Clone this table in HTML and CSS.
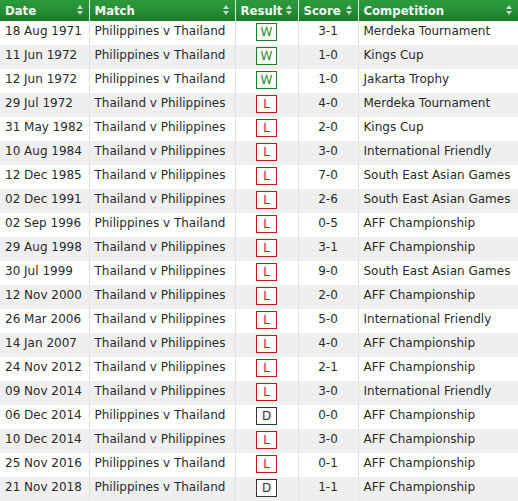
FILE: index.html
```html
<!DOCTYPE html>
<html>
<head>
<meta charset="utf-8">
<link rel="stylesheet" href="styles.css">
</head>
<body>
<table class="results">
  <colgroup>
    <col class="c-date"><col class="c-match"><col class="c-result"><col class="c-score"><col class="c-comp">
  </colgroup>
  <thead>
    <tr>
      <th>Date<span class="sort"></span></th>
      <th>Match<span class="sort"></span></th>
      <th>Result<span class="sort"></span></th>
      <th>Score<span class="sort"></span></th>
      <th>Competition<span class="sort"></span></th>
    </tr>
  </thead>
  <tbody>
    <tr><td>18 Aug 1971</td><td>Philippines v Thailand</td><td class="res"><span class="badge w">W</span></td><td class="score">3-1</td><td>Merdeka Tournament</td></tr>
    <tr><td>11 Jun 1972</td><td>Philippines v Thailand</td><td class="res"><span class="badge w">W</span></td><td class="score">1-0</td><td>Kings Cup</td></tr>
    <tr><td>12 Jun 1972</td><td>Philippines v Thailand</td><td class="res"><span class="badge w">W</span></td><td class="score">1-0</td><td>Jakarta Trophy</td></tr>
    <tr><td>29 Jul 1972</td><td>Thailand v Philippines</td><td class="res"><span class="badge l">L</span></td><td class="score">4-0</td><td>Merdeka Tournament</td></tr>
    <tr><td>31 May 1982</td><td>Thailand v Philippines</td><td class="res"><span class="badge l">L</span></td><td class="score">2-0</td><td>Kings Cup</td></tr>
    <tr><td>10 Aug 1984</td><td>Thailand v Philippines</td><td class="res"><span class="badge l">L</span></td><td class="score">3-0</td><td>International Friendly</td></tr>
    <tr><td>12 Dec 1985</td><td>Thailand v Philippines</td><td class="res"><span class="badge l">L</span></td><td class="score">7-0</td><td>South East Asian Games</td></tr>
    <tr><td>02 Dec 1991</td><td>Thailand v Philippines</td><td class="res"><span class="badge l">L</span></td><td class="score">2-6</td><td>South East Asian Games</td></tr>
    <tr><td>02 Sep 1996</td><td>Philippines v Thailand</td><td class="res"><span class="badge l">L</span></td><td class="score">0-5</td><td>AFF Championship</td></tr>
    <tr><td>29 Aug 1998</td><td>Thailand v Philippines</td><td class="res"><span class="badge l">L</span></td><td class="score">3-1</td><td>AFF Championship</td></tr>
    <tr><td>30 Jul 1999</td><td>Thailand v Philippines</td><td class="res"><span class="badge l">L</span></td><td class="score">9-0</td><td>South East Asian Games</td></tr>
    <tr><td>12 Nov 2000</td><td>Thailand v Philippines</td><td class="res"><span class="badge l">L</span></td><td class="score">2-0</td><td>AFF Championship</td></tr>
    <tr><td>26 Mar 2006</td><td>Thailand v Philippines</td><td class="res"><span class="badge l">L</span></td><td class="score">5-0</td><td>International Friendly</td></tr>
    <tr><td>14 Jan 2007</td><td>Thailand v Philippines</td><td class="res"><span class="badge l">L</span></td><td class="score">4-0</td><td>AFF Championship</td></tr>
    <tr><td>24 Nov 2012</td><td>Thailand v Philippines</td><td class="res"><span class="badge l">L</span></td><td class="score">2-1</td><td>AFF Championship</td></tr>
    <tr><td>09 Nov 2014</td><td>Thailand v Philippines</td><td class="res"><span class="badge l">L</span></td><td class="score">3-0</td><td>International Friendly</td></tr>
    <tr><td>06 Dec 2014</td><td>Philippines v Thailand</td><td class="res"><span class="badge d">D</span></td><td class="score">0-0</td><td>AFF Championship</td></tr>
    <tr><td>10 Dec 2014</td><td>Thailand v Philippines</td><td class="res"><span class="badge l">L</span></td><td class="score">3-0</td><td>AFF Championship</td></tr>
    <tr><td>25 Nov 2016</td><td>Philippines v Thailand</td><td class="res"><span class="badge l">L</span></td><td class="score">0-1</td><td>AFF Championship</td></tr>
    <tr><td>21 Nov 2018</td><td>Philippines v Thailand</td><td class="res"><span class="badge d">D</span></td><td class="score">1-1</td><td>AFF Championship</td></tr>
  </tbody>
</table>
</body>
</html>
```
FILE: styles.css
```css
html, body {
  margin: 0;
  padding: 0;
  background: #fff;
}
.results {
  width: 518px;
  border-collapse: collapse;
  table-layout: fixed;
  font-family: "DejaVu Sans", Verdana, sans-serif;
  font-size: 12px;
  color: #2a2a2a;
}
.c-date { width: 89px; }
.c-match { width: 146px; }
.c-result { width: 63px; }
.c-score { width: 60px; }
.c-comp { width: 160px; }

.results th {
  position: relative;
  height: 21px;
  padding: 0 14px 1px 5px;
  text-align: left;
  font-family: "DejaVu Sans Condensed", "DejaVu Sans", sans-serif;
  font-stretch: condensed;
  font-size: 13px;
  font-weight: bold;
  color: #f1faf0;
  background: linear-gradient(to bottom, #2c9a39 0%, #27923a 40%, #1a7a25 100%);
  border-left: 1px solid #d6ead4;
  white-space: nowrap;
  box-sizing: border-box;
}
.results th:first-child { border-left: none; }
.sort {
  position: absolute;
  right: 5px;
  top: 5px;
  width: 7px;
  height: 10px;
}
.sort::before, .sort::after {
  content: "";
  position: absolute;
  left: 0;
  border-left: 3.5px solid transparent;
  border-right: 3.5px solid transparent;
}
.sort::before {
  top: 0;
  border-bottom: 4px solid #c3dec3;
}
.sort::after {
  bottom: 0;
  border-top: 4px solid #c3dec3;
}

.results td {
  height: 24px;
  padding: 0 4px 5px 5px;
  border-left: 1px solid #e2e2e2;
  white-space: nowrap;
  box-sizing: border-box;
  vertical-align: middle;
}
.results td:first-child { border-left: none; }
.results tbody tr:nth-child(even) td { background: #efefef; }
.results td.score { text-align: center; padding-left: 0; padding-right: 0; }
.results td.res { text-align: center; padding: 0 0 3px 0; }

.badge {
  display: inline-block;
  width: 19px;
  height: 16px;
  line-height: 16px;
  border: 1px solid;
  text-align: center;
  font-size: 12px;
  vertical-align: middle;
  background: #fff;
}
.badge.w { color: #2a8a36; border-color: #1f7a2a; }
.badge.l { color: #d42020; border-color: #c41818; }
.badge.d { color: #333; border-color: #333; }
```
